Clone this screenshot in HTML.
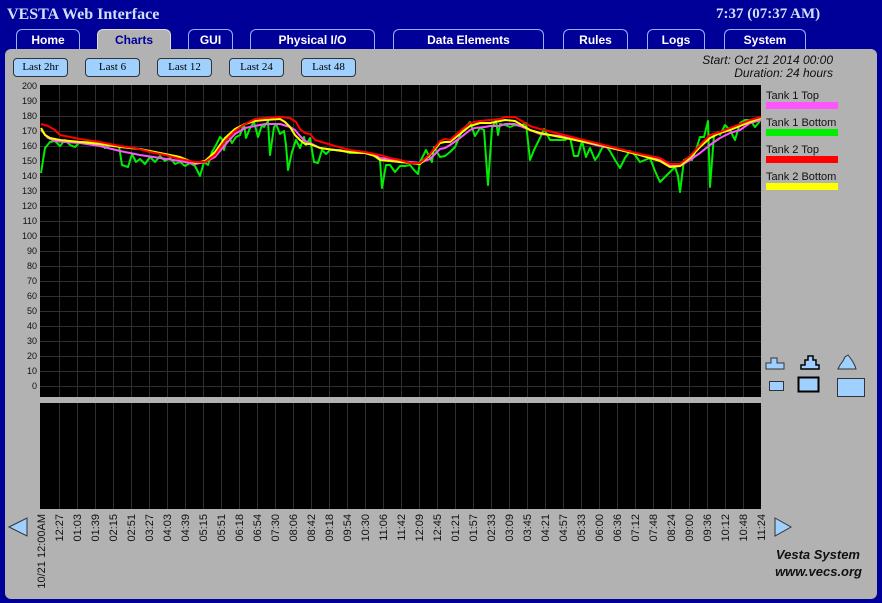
<!DOCTYPE html>
<html><head><meta charset="utf-8"><style>
body{margin:0;width:882px;height:603px;background:#000099;position:relative;overflow:hidden;font-family:"Liberation Sans",sans-serif}
.t{position:absolute;color:#cfe0ff;font-family:"Liberation Serif",serif;font-weight:bold;font-size:16px}
.tab{position:absolute;top:29px;height:21px;border:1px solid #8fb4ff;border-bottom:none;border-radius:6px 6px 0 0;background:#000099;color:#fff;font-weight:bold;font-size:12px;text-align:center;line-height:21px;box-sizing:border-box}
.tab.a{background:#b2b2b2;color:#000099;border-color:#ddd}
.panel{position:absolute;left:5px;top:49px;width:872px;height:550px;background:#b2b2b2;border-radius:6px}
.btn{position:absolute;top:58px;height:19px;width:55px;background:#9fd0ff;border:1px solid #333;border-radius:4px;box-sizing:border-box;font-family:"Liberation Serif",serif;font-size:11px;text-align:center;line-height:17px;color:#000}
.info{position:absolute;right:49px;top:54px;font-style:italic;font-size:12px;text-align:right;line-height:13px;color:#111}
</style></head><body>
<div class="t" style="left:7px;top:6px">VESTA Web Interface</div>
<div class="t" style="left:716px;top:6px;font-size:15px">7:37 (07:37 AM)</div>
<div class="tab" style="left:16px;width:64px">Home</div>
<div class="tab a" style="left:97px;width:74px">Charts</div>
<div class="tab" style="left:188px;width:45px">GUI</div>
<div class="tab" style="left:250px;width:125px">Physical I/O</div>
<div class="tab" style="left:393px;width:151px">Data Elements</div>
<div class="tab" style="left:563px;width:65px">Rules</div>
<div class="tab" style="left:647px;width:58px">Logs</div>
<div class="tab" style="left:724px;width:82px">System</div>
<div class="panel"></div>
<div class="btn" style="left:13px">Last 2hr</div>
<div class="btn" style="left:85px">Last 6</div>
<div class="btn" style="left:157px">Last 12</div>
<div class="btn" style="left:229px">Last 24</div>
<div class="btn" style="left:301px">Last 48</div>
<div class="info">Start: Oct 21 2014 00:00<br>Duration: 24 hours</div>
<svg style="position:absolute;left:0;top:0" width="882" height="603" font-family="Liberation Sans, sans-serif">
<rect x="40" y="85" width="721" height="312" fill="#000"/>
<rect x="40" y="403" width="721" height="106" fill="#000"/>
<g stroke="#2e2e2e" stroke-width="1" id="vg">
<path d="M59.5 85V397M77.5 85V397M95.5 85V397M113.5 85V397M131.5 85V397M149.5 85V397M167.5 85V397M185.5 85V397M203.5 85V397M221.5 85V397M239.5 85V397M257.5 85V397M275.5 85V397M293.5 85V397M311.5 85V397M329.5 85V397M347.5 85V397M365.5 85V397M383.5 85V397M401.5 85V397M419.5 85V397M437.5 85V397M455.5 85V397M473.5 85V397M491.5 85V397M509.5 85V397M527.5 85V397M545.5 85V397M563.5 85V397M581.5 85V397M599.5 85V397M617.5 85V397M635.5 85V397M653.5 85V397M671.5 85V397M689.5 85V397M707.5 85V397M725.5 85V397M743.5 85V397"/>
<path d="M59.5 403V509M77.5 403V509M95.5 403V509M113.5 403V509M131.5 403V509M149.5 403V509M167.5 403V509M185.5 403V509M203.5 403V509M221.5 403V509M239.5 403V509M257.5 403V509M275.5 403V509M293.5 403V509M311.5 403V509M329.5 403V509M347.5 403V509M365.5 403V509M383.5 403V509M401.5 403V509M419.5 403V509M437.5 403V509M455.5 403V509M473.5 403V509M491.5 403V509M509.5 403V509M527.5 403V509M545.5 403V509M563.5 403V509M581.5 403V509M599.5 403V509M617.5 403V509M635.5 403V509M653.5 403V509M671.5 403V509M689.5 403V509M707.5 403V509M725.5 403V509M743.5 403V509"/>
<path d="M40 101.5H761M40 116.5H761M40 131.5H761M40 146.5H761M40 161.5H761M40 176.5H761M40 191.5H761M40 206.5H761M40 221.5H761M40 236.5H761M40 251.5H761M40 266.5H761M40 281.5H761M40 296.5H761M40 311.5H761M40 326.5H761M40 341.5H761M40 356.5H761M40 371.5H761M40 386.5H761"/>
</g>
<g font-size="9" fill="#111" text-anchor="end">
<text x="37" y="89">200</text><text x="37" y="104">190</text><text x="37" y="119">180</text><text x="37" y="134">170</text><text x="37" y="149">160</text><text x="37" y="164">150</text><text x="37" y="179">140</text><text x="37" y="194">130</text><text x="37" y="209">120</text><text x="37" y="224">110</text><text x="37" y="239">100</text><text x="37" y="254">90</text><text x="37" y="269">80</text><text x="37" y="284">70</text><text x="37" y="299">60</text><text x="37" y="314">50</text><text x="37" y="329">40</text><text x="37" y="344">30</text><text x="37" y="359">20</text><text x="37" y="374">10</text><text x="37" y="389">0</text>
</g>
<g fill="none" stroke-width="2" stroke-linejoin="round">
<polyline stroke="#00ee00" points="41,173 45,148 50,142 55,141 60,146 65,140 70,145 75,147 80,142 90,142 100,143 105,148 110,145 119,146 122,165 128,167 132,154 136,162 140,159 145,164 150,157 155,162 160,156 165,161 170,158 175,164 180,162 185,166 190,163 195,166 200,176 204,162 208,165 212,152 216,145 220,137 222,139 224,150 228,135 232,143 236,137 240,135 244,124 246,138 250,128 254,122 258,137 262,125 264,127 268,121 270,155 274,127 276,124 280,134 284,131 286,145 288,170 292,152 296,140 300,148 304,137 306,145 310,138 314,162 318,163 322,150 326,154 330,150 340,150 350,153 360,153 370,153 380,160 382,188 386,165 390,165 395,172 400,166 405,166 410,165 414,170 418,174 420,162 426,150 432,162 434,147 440,157 445,156 450,152 455,147 462,131 470,122 475,136 480,128 484,130 488,185 492,128 496,120 498,135 500,124 505,125 510,127 515,125 520,126 526,123 530,160 534,150 540,138 544,129 548,136 550,140 555,140 560,140 565,140 570,137 574,156 578,156 582,141 586,157 590,148 595,160 598,156 602,148 606,146 610,151 615,160 620,168 625,158 630,151 635,155 640,162 645,160 650,158 655,171 660,182 665,177 670,172 675,167 678,176 680,192 684,160 688,158 692,160 696,150 700,137 704,137 708,121 710,187 714,135 718,132 720,135 725,125 730,130 735,140 740,123 745,120 750,120 755,127 760,121"/>
<polyline stroke="#ff55ff" points="41,130 48,138 55,141 65,142 80,143 100,146 120,151 140,155 160,158 180,161 195,164 205,162 215,157 225,145 235,134 245,128 255,126 265,124 280,124 290,127 295,130 300,136 305,141 310,143 320,148 335,150 350,152 365,153 375,155 380,158 390,159 400,161 410,162 420,163 430,159 440,149 445,148 450,145 460,138 470,130 475,128 485,127 490,126 500,126 505,124 515,124 520,126 525,128 530,130 540,134 560,136 580,141 600,146 620,150 640,155 660,160 670,165 680,166 690,160 700,153 710,145 720,138 730,133 740,130 750,123 761,120"/>
<polyline stroke="#ffff00" points="41,128 45,135 50,138 60,140 80,142 100,144 120,147 140,149 160,153 180,157 195,163 205,161 215,152 225,138 235,129 245,124 255,121 265,120 280,119 285,122 290,127 295,135 300,140 305,144 310,144 320,148 335,150 350,152 365,153 375,156 380,160 390,161 400,162 410,163 420,164 430,155 440,143 445,142 450,142 460,134 470,126 480,123 490,123 500,121 505,120 515,121 520,124 530,130 540,133 560,137 580,141 600,145 620,150 640,155 660,161 670,167 680,166 690,158 700,147 710,138 720,133 730,130 740,126 750,122 761,118"/>
<polyline stroke="#ff0000" points="41,124 48,126 55,130 60,135 70,137 80,139 100,142 120,146 135,148 150,152 165,155 180,159 195,162 205,162 215,155 225,141 235,131 245,124 255,119 265,118 280,117 290,118 296,122 300,129 305,133 310,134 315,140 325,143 335,146 350,150 365,152 380,155 390,158 400,160 410,163 420,163 430,154 440,141 445,139 450,140 460,131 470,123 480,121 490,120 500,119 505,117 515,117 520,120 530,126 540,129 560,134 580,139 600,144 620,149 640,154 660,158 670,164 680,164 690,156 700,145 710,135 720,132 730,128 740,124 750,120 761,117"/>
</g>
<g font-size="11" fill="#111">
<text x="766" y="99">Tank 1 Top</text><rect x="766" y="102" width="72" height="7" fill="#ff55ff"/>
<text x="766" y="126">Tank 1 Bottom</text><rect x="766" y="129" width="72" height="7" fill="#00ee00"/>
<text x="766" y="153">Tank 2 Top</text><rect x="766" y="156" width="72" height="7" fill="#ff0000"/>
<text x="766" y="180">Tank 2 Bottom</text><rect x="766" y="183" width="72" height="7" fill="#ffff00"/>
</g>
<g fill="#9fd0ff" stroke="#333" stroke-width="1">
<path d="M766 369V363H771V358H777V363H784V369Z"/>
<path d="M801 369V365H805V360H808V356H813V360H816V365H819V369Z" stroke="#000" stroke-width="1.5"/>
<path d="M838 369L840 365L843 361L845 357L848 355L851 359L853 362L855 366L856 369Z"/>
<rect x="769.5" y="381.5" width="14" height="9"/>
<rect x="798.5" y="377.5" width="20" height="14" stroke="#000" stroke-width="2"/>
<rect x="837.5" y="378.5" width="27" height="18"/>
<path d="M9 527L27 518V536Z"/>
<path d="M775 518L791 527L775 536Z"/>
</g>
<g font-size="11" fill="#111" text-anchor="end">
<text transform="translate(45,514) rotate(-90)">10/21 12:00AM</text>
<text transform="translate(63,514) rotate(-90)">12:27</text><text transform="translate(81,514) rotate(-90)">01:03</text><text transform="translate(99,514) rotate(-90)">01:39</text><text transform="translate(117,514) rotate(-90)">02:15</text><text transform="translate(135,514) rotate(-90)">02:51</text><text transform="translate(153,514) rotate(-90)">03:27</text><text transform="translate(171,514) rotate(-90)">04:03</text><text transform="translate(189,514) rotate(-90)">04:39</text><text transform="translate(207,514) rotate(-90)">05:15</text><text transform="translate(225,514) rotate(-90)">05:51</text><text transform="translate(243,514) rotate(-90)">06:18</text><text transform="translate(261,514) rotate(-90)">06:54</text><text transform="translate(279,514) rotate(-90)">07:30</text><text transform="translate(297,514) rotate(-90)">08:06</text><text transform="translate(315,514) rotate(-90)">08:42</text><text transform="translate(333,514) rotate(-90)">09:18</text><text transform="translate(351,514) rotate(-90)">09:54</text><text transform="translate(369,514) rotate(-90)">10:30</text><text transform="translate(387,514) rotate(-90)">11:06</text><text transform="translate(405,514) rotate(-90)">11:42</text><text transform="translate(423,514) rotate(-90)">12:09</text><text transform="translate(441,514) rotate(-90)">12:45</text><text transform="translate(459,514) rotate(-90)">01:21</text><text transform="translate(477,514) rotate(-90)">01:57</text><text transform="translate(495,514) rotate(-90)">02:33</text><text transform="translate(513,514) rotate(-90)">03:09</text><text transform="translate(531,514) rotate(-90)">03:45</text><text transform="translate(549,514) rotate(-90)">04:21</text><text transform="translate(567,514) rotate(-90)">04:57</text><text transform="translate(585,514) rotate(-90)">05:33</text><text transform="translate(603,514) rotate(-90)">06:00</text><text transform="translate(621,514) rotate(-90)">06:36</text><text transform="translate(639,514) rotate(-90)">07:12</text><text transform="translate(657,514) rotate(-90)">07:48</text><text transform="translate(675,514) rotate(-90)">08:24</text><text transform="translate(693,514) rotate(-90)">09:00</text><text transform="translate(711,514) rotate(-90)">09:36</text><text transform="translate(729,514) rotate(-90)">10:12</text><text transform="translate(747,514) rotate(-90)">10:48</text><text transform="translate(765,514) rotate(-90)">11:24</text>
</g>
<g font-size="13" font-weight="bold" font-style="italic" fill="#111" text-anchor="end">
<text x="860" y="559">Vesta System</text>
<text x="862" y="576">www.vecs.org</text>
</g>
</svg>
</body></html>
